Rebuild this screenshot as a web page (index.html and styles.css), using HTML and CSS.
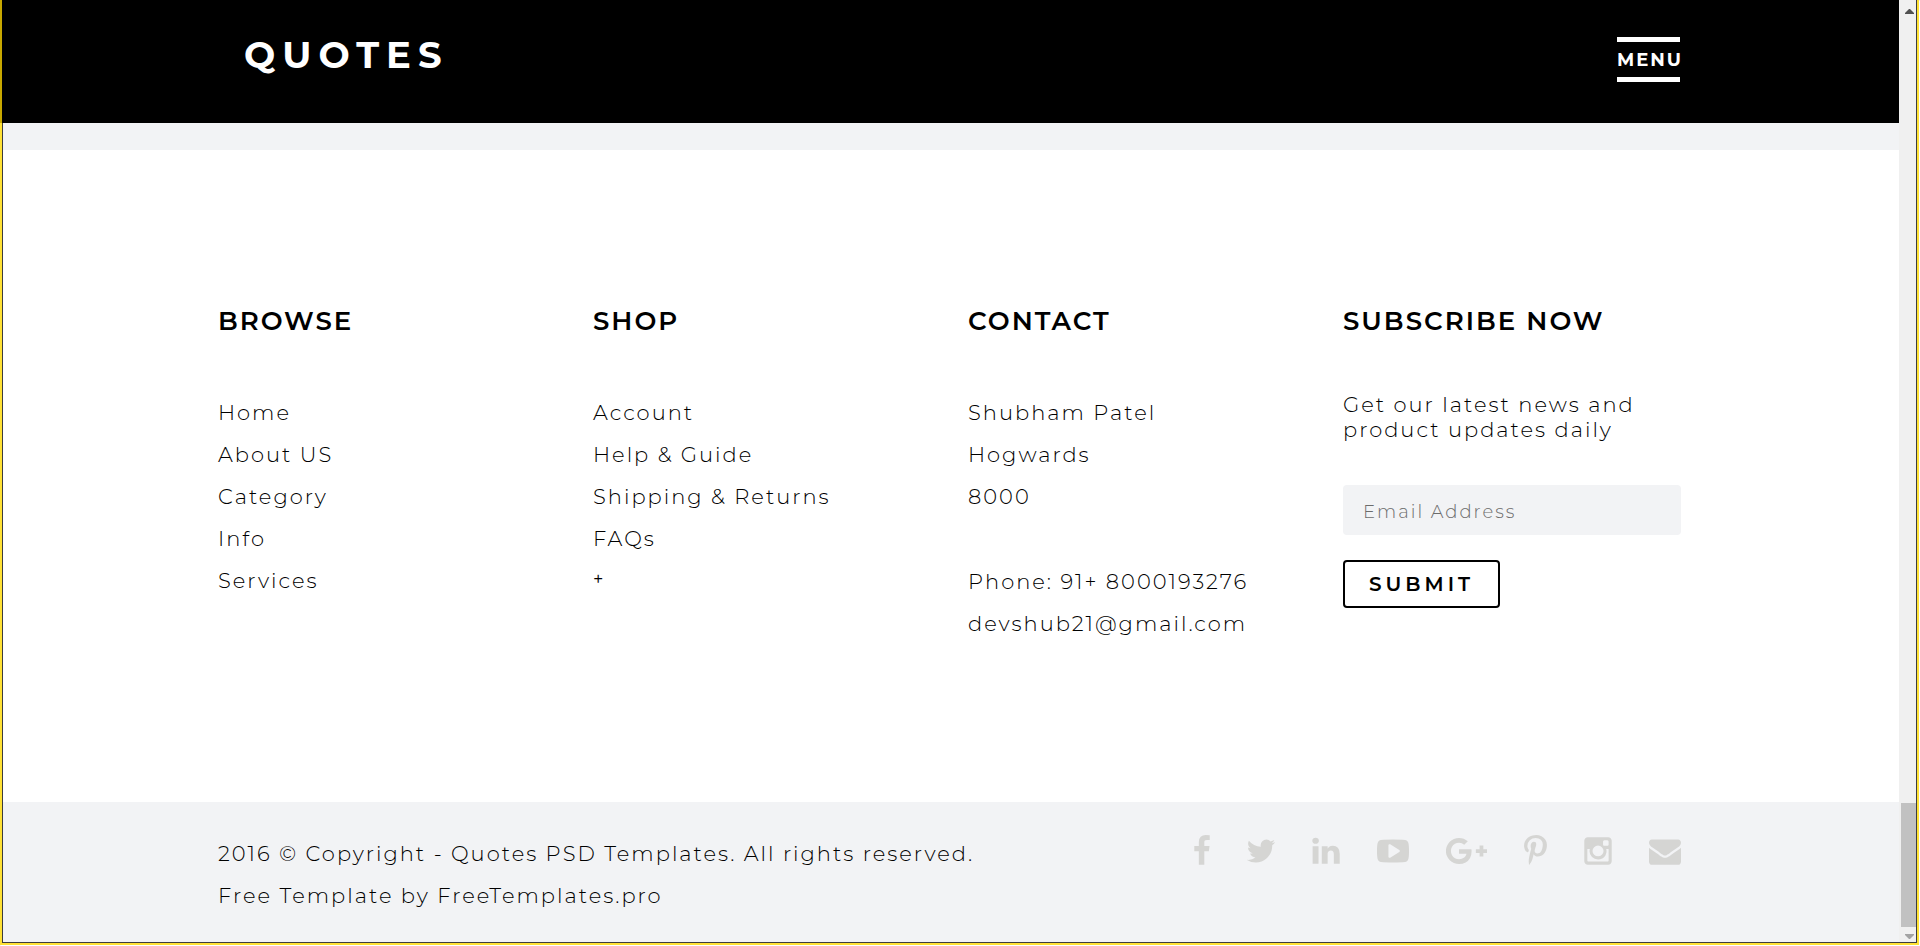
FILE: index.html
```html
<!DOCTYPE html>
<html lang="en">
<head>
<meta charset="utf-8">
<title>Quotes</title>
<link rel="stylesheet" href="styles.css">
</head>
<body>
<div class="window">
  <div class="page">
    <header class="header">
      <div class="container header-row">
        <a class="logo" href="#">QUOTES</a>
        <button class="menu" type="button">MENU</button>
      </div>
    </header>
    <div class="band"></div>
    <main class="main">
      <div class="container columns">
        <section>
          <h2 class="title">BROWSE</h2>
          <ul class="list">
            <li><a href="#">Home</a></li>
            <li><a href="#">About US</a></li>
            <li><a href="#">Category</a></li>
            <li><a href="#">Info</a></li>
            <li><a href="#">Services</a></li>
          </ul>
        </section>
        <section>
          <h2 class="title">SHOP</h2>
          <ul class="list">
            <li><a href="#">Account</a></li>
            <li><a href="#">Help &amp; Guide</a></li>
            <li><a href="#">Shipping &amp; Returns</a></li>
            <li><a href="#">FAQs</a></li>
            <li class="plus">+</li>
          </ul>
        </section>
        <section>
          <h2 class="title">CONTACT</h2>
          <ul class="list">
            <li>Shubham Patel</li>
            <li>Hogwards</li>
            <li>8000</li>
          </ul>
          <ul class="list list-next">
            <li>Phone: 91+ 8000193276</li>
            <li><a href="#">devshub21@gmail.com</a></li>
          </ul>
        </section>
        <section>
          <h2 class="title">SUBSCRIBE NOW</h2>
          <form class="form">
            <p class="lead">Get our latest news and<br>product updates daily</p>
            <input class="field" type="email" placeholder="Email Address" aria-label="Email Address">
            <button class="submit" type="button">SUBMIT</button>
          </form>
        </section>
      </div>
    </main>
    <footer class="footer">
      <div class="container footer-row">
        <div class="copy">
          <p>2016 © Copyright - Quotes PSD Templates. All rights reserved.</p>
          <p>Free Template by <a href="#">FreeTemplates.pro</a></p>
        </div>
        <nav class="social" aria-label="Social">
          <a href="#" aria-label="Facebook"><svg viewBox="463 0 896 1792"><path d="M1343 12v264h-157q-86 0-116 36t-30 108v189h293l-39 296h-254v759h-306v-759h-255v-296h255v-218q0-186 104-288.500t277-102.500q147 0 228 12z"/></svg></a>
          <a href="#" aria-label="Twitter"><svg viewBox="112 0 1568 1792"><path d="M1684 408q-67 98-162 167 1 14 1 42 0 130-38 259.500t-115.500 248.500-184.500 210.500-258 146-323 54.500q-271 0-496-145 35 4 78 4 225 0 401-138-105-2-188-64.500t-114-159.500q33 5 61 5 43 0 85-11-112-23-185.500-111.500t-73.500-205.500v-4q68 38 146 41-66-44-105-115t-39-154q0-88 44-163 121 149 294.500 238.500t371.500 99.500q-8-38-8-74 0-134 94.500-228.500t228.500-94.500q140 0 236 102 109-21 205-78-37 115-142 178 93-10 186-50z"/></svg></a>
          <a href="#" aria-label="LinkedIn"><svg viewBox="112 0 1568 1792"><path d="M477 625v991h-330v-991h330zm21-306q1 73-50.500 122t-135.500 49h-2q-82 0-132-49t-50-122q0-74 51.500-122.500t134.500-48.500 133 48.500 51 122.500zm1166 729v568h-329v-530q0-105-40.500-164.500t-126.500-59.500q-63 0-105.500 34.500t-63.500 85.500q-11 30-11 81v553h-329q2-399 2-647t-1-296l-1-48h329v144h-2q20-32 41-56t56.500-52 87-43.500 114.500-15.500q171 0 275 113.500t104 332.500z"/></svg></a>
          <a href="#" aria-label="YouTube"><svg viewBox="0 0 1792 1792"><path d="M1280 896q0-37-30-54l-512-320q-31-20-65-2-33 18-33 56v640q0 38 33 56 16 8 31 8 20 0 34-10l512-320q30-17 30-54zm512 0q0 96-1 150t-8.500 136.500-22.500 147.500q-16 73-69 123t-124 58q-222 25-671 25t-671-25q-71-8-124.500-58t-69.500-123q-14-65-21.500-147.500t-8.500-136.500-1-150 1-150 8.500-136.500 22.500-147.500q16-73 69-123t124-58q222-25 671-25t671 25q71 8 124.500 58t69.500 123q14 65 21.500 147.500t8.500 136.500 1 150z"/></svg></a>
          <a href="#" aria-label="Google Plus"><svg viewBox="4 0 2296 1792"><path d="M1437 913q0 208-87 370.500t-248 254-369 91.500q-149 0-285-58t-234-156-156-234-58-285 58-285 156-234 234-156 285-58q286 0 491 192l-199 191q-117-113-292-113-123 0-227.500 62t-165.500 168.500-61 232.500 61 232.500 165.500 168.500 227.500 62q83 0 152.500-23t114.500-57.500 78.500-78.500 49-83 21.500-74h-416v-252h692q12 63 12 122zm867-122v210h-209v209h-210v-209h-209v-210h209v-209h210v209h209z"/></svg></a>
          <a href="#" aria-label="Pinterest"><svg viewBox="252 0 1288 1792"><path d="M256 597q0-108 37.500-203.500t103.500-166.500 152-123 185-78 202-26q158 0 294 66.500t221 193.500 85 287q0 96-19 188t-60 177-100 149.500-145 103-189 38.500q-68 0-135-32t-96-88q-10 39-28 112.500t-23.500 95-20.500 71-26 71-32 62.500-46 77.500-62 86.500l-14 5-9-10q-15-157-15-188 0-92 21.500-206.500t66.500-287.500 52-203q-32-65-32-169 0-83 52-156t132-73q61 0 95 40.500t34 102.500q0 66-44 191t-44 187q0 63 45 104.500t109 41.500q55 0 102-25t78.500-68 56-95 38-110.500 20-111 6.500-99.500q0-173-109.500-269.500t-285.500-96.500q-200 0-334 129.500t-134 328.500q0 44 12.500 85t27 65 27 45.500 12.500 30.500q0 28-15 73t-37 45q-2 0-17-3-51-15-90.500-56t-61-94.500-32.500-108-11-106.500z"/></svg></a>
          <a href="#" aria-label="Instagram"><svg viewBox="112 0 1568 1792"><path d="M1490 1426v-648h-135q20 63 20 131 0 126-64 232.500t-174 168.500-240 62q-197 0-337-135.500t-140-327.500q0-68 20-131h-141v648q0 26 17.500 43.500t43.500 17.500h1069q25 0 43-17.500t18-43.500zm-284-533q0-124-90.500-211.500t-218.500-87.500q-127 0-217.500 87.500t-90.500 211.500 90.500 211.500 217.500 87.500q128 0 218.500-87.500t90.500-211.500zm284-360v-165q0-28-20-48.500t-49-20.500h-174q-29 0-49 20.500t-20 48.500v165q0 29 20 49t49 20h174q29 0 49-20t20-49zm174-208v1142q0 81-58 139t-139 58h-1142q-81 0-139-58t-58-139v-1142q0-81 58-139t139-58h1142q81 0 139 58t58 139z"/></svg></a>
          <a href="#" aria-label="Email"><svg viewBox="0 0 1792 1792"><path d="M1792 710v794q0 66-47 113t-113 47h-1472q-66 0-113-47t-47-113v-794q44 49 101 87 362 246 497 345 57 42 92.500 65.500t94.500 48 110 24.500h2q51 0 110-24.500t94.500-48 92.500-65.500q170-123 498-345 57-39 100-87zm0-294q0 79-49 151t-122 123q-376 261-468 325-10 7-42.500 31t-54 38.500-52 32.500-57.500 27-50 9h-2q-23 0-50-9t-57.500-27-52-32.500-54-38.500-42.500-31q-91-64-262-182.500t-205-142.500q-62-42-117-115.500t-55-136.500q0-78 41.500-130t118.500-52h1472q65 0 112.500 47t47.500 113z"/></svg></a>
        </nav>
      </div>
    </footer>
  </div>
  <div class="scrollbar" aria-hidden="true">
    <svg class="arrow" viewBox="0 0 9 5"><path d="M4 0h1l4 4v1H0V4z" fill="#505050"/></svg>
    <div class="thumb"></div>
    <svg class="arrow" viewBox="0 0 9 5"><path d="M0 0h9v1L5 5H4L0 1z" fill="#a3a3a3"/></svg>
  </div>
  <div class="frame" aria-hidden="true"></div>
</div>
</body>
</html>
```
FILE: styles.css
```css
* { box-sizing: border-box; }

body {
  margin: 0;
  background: #fff;
  color: #000;
  font: 300 21px/42px Montserrat, Inter, "Open Sans", sans-serif;
  letter-spacing: 2px;
}

a { color: inherit; text-decoration: none; }
p, h2, ul { margin: 0; padding: 0; }
button, input { font: inherit; letter-spacing: inherit; color: inherit; }

.window {
  position: relative;
  display: flex;
  min-height: 100vh;
}

.page {
  flex: 1;
  display: flex;
  flex-direction: column;
}

.container {
  width: 100%;
  max-width: 1463px;
  margin: 0 auto;
}

.header {
  position: relative;
  z-index: 1;
  border-left: 2px solid #c8a800;
  background: #000;
}

.header-row {
  display: flex;
  justify-content: space-between;
  align-items: flex-start;
  padding: 33px 2px 41px 25px;
}

.logo {
  color: #fff;
  font-size: 37px;
  line-height: 44px;
  font-weight: 700;
  letter-spacing: 7px;
}

.menu {
  width: 63px;
  margin-top: 4px;
  padding: 2px 0 0;
  border: solid #fff;
  border-width: 5px 0;
  background: none;
  color: #fff;
  font-size: 18px;
  line-height: 33px;
  font-weight: 700;
  text-align: left;
}

.band {
  height: 27px;
  background: #f2f3f5;
}

.main {
  flex: 1;
  padding: 155px 0 157px;
}

.columns {
  display: grid;
  grid-template-columns: repeat(4, 1fr);
  gap: 37px;
}

.title {
  margin-bottom: 55px;
  font-size: 26px;
  line-height: 32px;
  font-weight: 600;
}

.list { list-style: none; }
.list-next { margin-top: 43px; }
.plus { font-size: 18px; line-height: 38px; font-weight: 400; }

.form {
  display: flex;
  flex-direction: column;
  align-items: flex-start;
}

.lead {
  margin-bottom: 43px;
  line-height: 25px;
}

.field {
  width: 100%;
  height: 50px;
  margin-bottom: 25px;
  padding: 3px 20px 0;
  border: 0;
  border-radius: 4px;
  background: #f2f3f5;
  font-size: 18px;
}

.field::placeholder { color: #6c6c6c; }

.submit {
  height: 48px;
  padding: 0 24px;
  border: 2px solid #000;
  border-radius: 4px;
  background: #fff;
  font-size: 20px;
  line-height: 44px;
  font-weight: 600;
  letter-spacing: 4px;
}

.footer {
  padding: 31px 0 29px;
  background: #f2f3f5;
}

.footer-row {
  display: flex;
  justify-content: space-between;
  align-items: flex-start;
}

.social {
  display: flex;
  gap: 37px;
  padding-top: 2px;
}

.social a { display: block; line-height: 0; }
.social svg { height: 32px; fill: #d5d5d3; }

.scrollbar {
  display: flex;
  flex-direction: column;
  align-items: center;
  width: 21px;
  padding: 9px 3px 7px 2px;
  background: #f0f0f0;
}

.arrow { width: 9px; height: 5px; }

.thumb {
  width: 16px;
  height: 124px;
  margin: auto 0 7px;
  background: #c1c1c1;
}

.frame {
  position: absolute;
  inset: 0 1px 1px 0;
  border: solid #ffe135;
  border-width: 0 2px 2px;
  box-shadow: inset 1px -1px #3c3c3c, inset -1px 0 #3c3c3c, 1px 1px #fff;
  pointer-events: none;
}
```
